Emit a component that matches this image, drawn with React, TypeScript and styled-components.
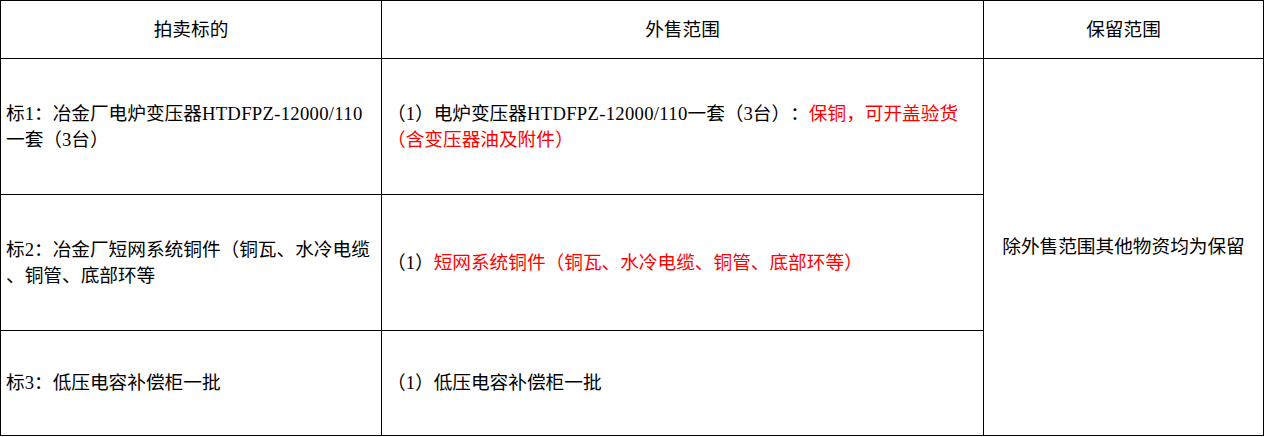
import styled, { createGlobalStyle } from "styled-components";

const GlobalStyle = createGlobalStyle`
    html, body {
        margin: 0;
        padding: 0;
        background: #fff;
    }
`;

const Table = styled.table`
    width: 1264px;
    border-collapse: collapse;
    table-layout: fixed;
    font-family: "Liberation Serif", "Noto Sans CJK SC", serif;
    font-size: 18.67px;
    line-height: 26px;
    color: #000;
    text-spacing-trim: space-all;
`;

const Row = styled.tr<{ $height: number }>`
    height: ${({ $height }) => $height}px;
`;

const HeadCell = styled.th`
    border: 1px solid #000;
    padding: 0 5px;
    font-weight: normal;
    text-align: center;
    vertical-align: middle;
`;

const Cell = styled.td<{ $center?: boolean }>`
    border: 1px solid #000;
    padding: 0 5px;
    text-align: ${({ $center }) => ($center ? "center" : "left")};
    vertical-align: middle;
    white-space: nowrap;
`;

const Latin = styled.span`
    letter-spacing: 0.3px;
`;

const Red = styled.span`
    color: #ff0000;
`;

const lots = [
    {
        name: (
            <>
                标1：冶金厂电炉变压器<Latin>HTDFPZ-12000/110</Latin>
                <br />
                一套（3台）
            </>
        ),
        sale: (
            <>
                （1）电炉变压器<Latin>HTDFPZ-12000/110</Latin>一套（3台）：
                <Red>保铜，可开盖验货</Red>
                <br />
                <Red>（含变压器油及附件）</Red>
            </>
        ),
        height: 136,
    },
    {
        name: (
            <>
                标2：冶金厂短网系统铜件（铜瓦、水冷电缆
                <br />
                、铜管、底部环等
            </>
        ),
        sale: (
            <>
                （1）<Red>短网系统铜件（铜瓦、水冷电缆、铜管、底部环等）</Red>
            </>
        ),
        height: 136,
    },
    {
        name: <>标3：低压电容补偿柜一批</>,
        sale: <>（1）低压电容补偿柜一批</>,
        height: 105,
    },
];

const App = () => {
    return (
        <>
            <GlobalStyle />
            <Table>
                <colgroup>
                    <col style={{ width: 381 }} />
                    <col style={{ width: 602 }} />
                    <col style={{ width: 280 }} />
                </colgroup>
                <thead>
                    <Row $height={58}>
                        <HeadCell>拍卖标的</HeadCell>
                        <HeadCell>外售范围</HeadCell>
                        <HeadCell>保留范围</HeadCell>
                    </Row>
                </thead>
                <tbody>
                    {lots.map((lot, i) => (
                        <Row key={i} $height={lot.height}>
                            <Cell>{lot.name}</Cell>
                            <Cell>{lot.sale}</Cell>
                            {i === 0 && (
                                <Cell rowSpan={lots.length} $center>
                                    除外售范围其他物资均为保留
                                </Cell>
                            )}
                        </Row>
                    ))}
                </tbody>
            </Table>
        </>
    );
};

export default App;
